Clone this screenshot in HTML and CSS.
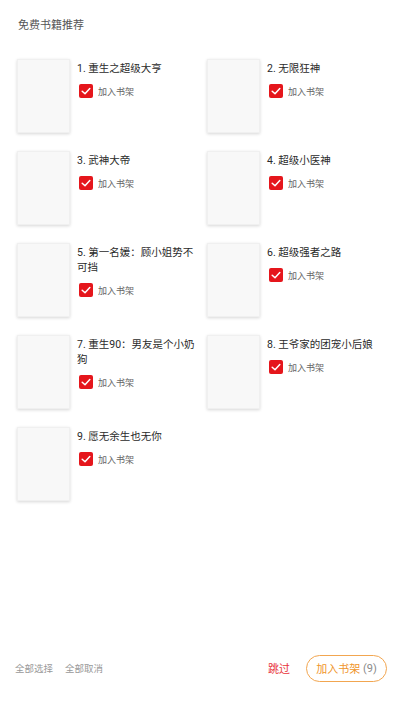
FILE: index.html
```html
<!DOCTYPE html>
<html lang="zh">
<head>
<meta charset="utf-8">
<title>免费书籍推荐</title>
<link rel="stylesheet" href="styles.css">
</head>
<body>
<div class="page">
  <div class="header">免费书籍推荐</div>
  <div class="list">
    <div class="book"><div class="cover"></div><div class="info"><div class="name">1. 重生之超级大亨</div><div class="check"><svg class="box" viewBox="0 0 14 14" width="14" height="14"><rect x="0" y="0" width="14" height="14" rx="2" fill="#e5161c"/><path d="M3.2 7.2 L6 9.8 L10.8 4.6" fill="none" stroke="#fff" stroke-width="1.5" stroke-linecap="round" stroke-linejoin="round"/></svg><span>加入书架</span></div></div></div>
    <div class="book"><div class="cover"></div><div class="info"><div class="name">2. 无限狂神</div><div class="check"><svg class="box" viewBox="0 0 14 14" width="14" height="14"><rect x="0" y="0" width="14" height="14" rx="2" fill="#e5161c"/><path d="M3.2 7.2 L6 9.8 L10.8 4.6" fill="none" stroke="#fff" stroke-width="1.5" stroke-linecap="round" stroke-linejoin="round"/></svg><span>加入书架</span></div></div></div>
    <div class="book"><div class="cover"></div><div class="info"><div class="name">3. 武神大帝</div><div class="check"><svg class="box" viewBox="0 0 14 14" width="14" height="14"><rect x="0" y="0" width="14" height="14" rx="2" fill="#e5161c"/><path d="M3.2 7.2 L6 9.8 L10.8 4.6" fill="none" stroke="#fff" stroke-width="1.5" stroke-linecap="round" stroke-linejoin="round"/></svg><span>加入书架</span></div></div></div>
    <div class="book"><div class="cover"></div><div class="info"><div class="name">4. 超级小医神</div><div class="check"><svg class="box" viewBox="0 0 14 14" width="14" height="14"><rect x="0" y="0" width="14" height="14" rx="2" fill="#e5161c"/><path d="M3.2 7.2 L6 9.8 L10.8 4.6" fill="none" stroke="#fff" stroke-width="1.5" stroke-linecap="round" stroke-linejoin="round"/></svg><span>加入书架</span></div></div></div>
    <div class="book"><div class="cover"></div><div class="info"><div class="name">5. 第一名媛：顾小姐势不可挡</div><div class="check"><svg class="box" viewBox="0 0 14 14" width="14" height="14"><rect x="0" y="0" width="14" height="14" rx="2" fill="#e5161c"/><path d="M3.2 7.2 L6 9.8 L10.8 4.6" fill="none" stroke="#fff" stroke-width="1.5" stroke-linecap="round" stroke-linejoin="round"/></svg><span>加入书架</span></div></div></div>
    <div class="book"><div class="cover"></div><div class="info"><div class="name">6. 超级强者之路</div><div class="check"><svg class="box" viewBox="0 0 14 14" width="14" height="14"><rect x="0" y="0" width="14" height="14" rx="2" fill="#e5161c"/><path d="M3.2 7.2 L6 9.8 L10.8 4.6" fill="none" stroke="#fff" stroke-width="1.5" stroke-linecap="round" stroke-linejoin="round"/></svg><span>加入书架</span></div></div></div>
    <div class="book"><div class="cover"></div><div class="info"><div class="name">7. 重生90：男友是个小奶狗</div><div class="check"><svg class="box" viewBox="0 0 14 14" width="14" height="14"><rect x="0" y="0" width="14" height="14" rx="2" fill="#e5161c"/><path d="M3.2 7.2 L6 9.8 L10.8 4.6" fill="none" stroke="#fff" stroke-width="1.5" stroke-linecap="round" stroke-linejoin="round"/></svg><span>加入书架</span></div></div></div>
    <div class="book"><div class="cover"></div><div class="info"><div class="name">8. 王爷家的团宠小后娘</div><div class="check"><svg class="box" viewBox="0 0 14 14" width="14" height="14"><rect x="0" y="0" width="14" height="14" rx="2" fill="#e5161c"/><path d="M3.2 7.2 L6 9.8 L10.8 4.6" fill="none" stroke="#fff" stroke-width="1.5" stroke-linecap="round" stroke-linejoin="round"/></svg><span>加入书架</span></div></div></div>
    <div class="book"><div class="cover"></div><div class="info"><div class="name">9. 愿无余生也无你</div><div class="check"><svg class="box" viewBox="0 0 14 14" width="14" height="14"><rect x="0" y="0" width="14" height="14" rx="2" fill="#e5161c"/><path d="M3.2 7.2 L6 9.8 L10.8 4.6" fill="none" stroke="#fff" stroke-width="1.5" stroke-linecap="round" stroke-linejoin="round"/></svg><span>加入书架</span></div></div></div>
  </div>
  <div class="footer">
    <div class="left">
      <span class="link">全部选择</span>
      <span class="link">全部取消</span>
    </div>
    <div class="right">
      <span class="skip">跳过</span>
      <span class="add">加入书架 <span class="count">(9)</span></span>
    </div>
  </div>
</div>
</body>
</html>
```

FILE: styles.css
```css
* { box-sizing: border-box; }
html, body {
  margin: 0;
  padding: 0;
  background: #fff;
}
body {
  font-family: Roboto, "Noto Sans CJK SC", sans-serif;
  color: #333;
}
.page {
  height: 711px;
  display: flex;
  flex-direction: column;
}
.header {
  font-size: 11px;
  line-height: 16px;
  color: #555;
  padding: 18px 0 0 18px;
  height: 59px;
}
.list {
  flex: 1;
  display: grid;
  grid-template-columns: 190px 190px;
  grid-auto-rows: 74px;
  row-gap: 18px;
  padding-left: 17px;
  align-content: start;
}
.book {
  display: flex;
  gap: 7px;
}
.cover {
  width: 53px;
  height: 74px;
  flex: none;
  background: #f8f8f8;
  border: 1px solid #f0f0f0;
  box-shadow: 0 1px 3px rgba(0,0,0,0.16);
}
.info {
  padding-top: 2px;
  width: 122px;
}
.name {
  font-size: 10.5px;
  line-height: 15px;
  color: #2a2a2a;
}
.check {
  margin-top: 8px;
  display: flex;
  align-items: center;
  gap: 5px;
  height: 14px;
  padding-left: 2px;
}
.box { display: block; flex: none; }
.check span {
  font-size: 9px;
  color: #666;
}
.footer {
  height: 56px;
  margin-bottom: 15px;
  display: flex;
  align-items: center;
  justify-content: space-between;
  padding: 0 12px 0 15px;
}
.left {
  display: flex;
  gap: 12px;
}
.link {
  font-size: 9.5px;
  color: #999;
}
.right {
  display: flex;
  align-items: center;
  gap: 16px;
}
.skip {
  font-size: 11px;
  color: #e8333a;
}
.add {
  height: 27px;
  width: 81px;
  border: 1px solid #f2a650;
  border-radius: 14px;
  display: flex;
  align-items: center;
  justify-content: center;
  font-size: 11px;
  color: #f0952a;
  white-space: pre;
}
.count { color: #8a8a8a; }
```
